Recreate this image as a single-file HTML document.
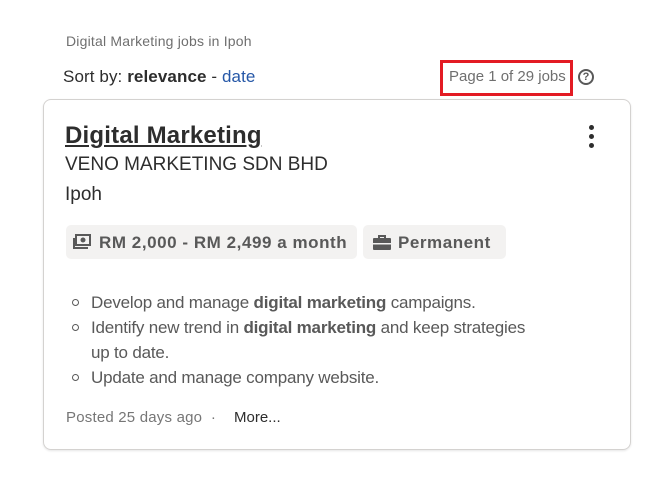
<!DOCTYPE html>
<html><head><style>
body{margin:0;width:660px;height:492px;background:#fff;font-family:"Liberation Sans",sans-serif;position:relative;overflow:hidden}
.a{position:absolute;white-space:nowrap}
.chip{position:absolute;top:225px;height:34px;background:#f3f2f1;border-radius:5px;font-weight:bold;font-size:17px;letter-spacing:.55px;color:#595959;line-height:35px}
.li{position:absolute;left:91px;font-size:17px;letter-spacing:-0.2px;color:#595959;white-space:nowrap}
.li b{color:#595959}
.dot{position:absolute;left:72px;width:5px;height:5px;border:1px solid #595959;border-radius:50%}
</style></head><body>
<div class="a" style="left:66px;top:33px;font-size:14px;letter-spacing:.2px;color:#6f6f6f">Digital Marketing jobs in Ipoh</div>
<div class="a" style="left:63px;top:67px;font-size:17px;letter-spacing:.1px;color:#2d2d2d">Sort by: <b>relevance</b> - <span style="color:#2557a7">date</span></div>
<div class="a" style="left:440px;top:60px;width:127px;height:30px;border:3px solid #e31b23"></div>
<div class="a" style="left:449px;top:68px;font-size:15px;color:#6f6f6f">Page 1 of 29 jobs</div>
<div class="a" style="left:578px;top:69px;width:12px;height:12px;border:2px solid #595959;border-radius:50%;font-size:11px;font-weight:bold;color:#595959;text-align:center;line-height:12px">?</div>
<div class="a" style="left:43px;top:99px;width:586px;height:349px;border:1px solid #d4d2d0;border-radius:8px;box-shadow:0 1px 2px rgba(0,0,0,.1)"></div>
<div class="a" style="left:65px;top:122px;font-size:24px;letter-spacing:.2px;font-weight:bold;color:#2d2d2d;text-decoration:underline">Digital Marketing</div>
<div class="a" style="left:589px;top:125px;width:5px;height:5px;border-radius:50%;background:#2d2d2d"></div>
<div class="a" style="left:589px;top:134px;width:5px;height:5px;border-radius:50%;background:#2d2d2d"></div>
<div class="a" style="left:589px;top:143px;width:5px;height:5px;border-radius:50%;background:#2d2d2d"></div>
<div class="a" style="left:65px;top:154px;font-size:19px;color:#2d2d2d">VENO MARKETING SDN BHD</div>
<div class="a" style="left:65px;top:184px;font-size:19px;color:#2d2d2d">Ipoh</div>
<div class="chip" style="left:66px;width:291px">
<svg style="position:absolute;left:7px;top:9px" width="18" height="16" viewBox="0 0 18 16"><rect x="3" y="1" width="14" height="10" fill="none" stroke="#595959" stroke-width="2"/><circle cx="10" cy="6" r="2.5" fill="#595959"/><path d="M1 4v10h14" fill="none" stroke="#595959" stroke-width="2"/></svg>
<span style="position:absolute;left:33px">RM 2,000 - RM 2,499 a month</span></div>
<div class="chip" style="left:363px;width:143px">
<svg style="position:absolute;left:10px;top:10px" width="18" height="15" viewBox="0 0 18 15"><path d="M6 3V1h6v2" fill="none" stroke="#595959" stroke-width="2"/><rect x="0" y="3" width="18" height="12" rx="1" fill="#595959"/><rect x="0" y="8" width="18" height="1.5" fill="#f3f2f1"/></svg>
<span style="position:absolute;left:35px">Permanent</span></div>
<div class="dot" style="top:299px"></div><div class="li" style="top:293px">Develop and manage <b>digital marketing</b> campaigns.</div>
<div class="dot" style="top:324px"></div><div class="li" style="top:318px">Identify new trend in <b>digital marketing</b> and keep strategies</div>
<div class="li" style="top:343px">up to date.</div>
<div class="dot" style="top:374px"></div><div class="li" style="top:368px">Update and manage company website.</div>
<div class="a" style="left:66px;top:409px;font-size:15px;letter-spacing:.2px;color:#767676">Posted 25 days ago &nbsp;·</div>
<div class="a" style="left:234px;top:409px;font-size:15px;color:#2d2d2d">More...</div>
</body></html>
